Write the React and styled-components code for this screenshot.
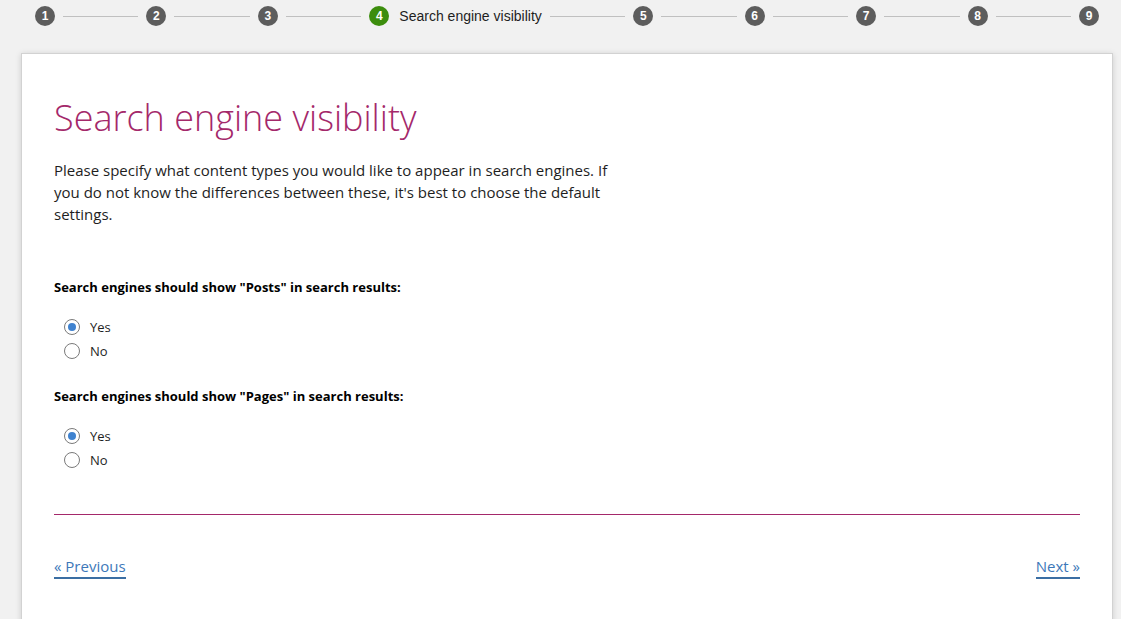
import React from 'react';
import styled, { createGlobalStyle } from 'styled-components';

const GlobalStyle = createGlobalStyle`
    html, body {
        margin: 0;
        padding: 0;
        background: #f1f1f1;
        font-family: "Open Sans", "Noto Sans", sans-serif;
        color: #1e1e1e;
    }
`;

const Page = styled.div`
    width: 1121px;
    height: 619px;
    overflow: hidden;
    background: #f1f1f1;
`;

const StepBar = styled.ol`
    display: flex;
    align-items: center;
    gap: 8px;
    list-style: none;
    margin: 0;
    padding: 6px 22px 0 35px;
    height: 20px;
`;

const Step = styled.li`
    display: flex;
    align-items: center;
    gap: 10px;
    flex: none;
`;

const Bullet = styled.span`
    display: flex;
    align-items: center;
    justify-content: center;
    width: 20px;
    height: 20px;
    border-radius: 50%;
    background: ${props => (props.active ? '#3c8d0d' : '#5d5d5d')};
    color: #fff;
    font: bold 12px "Liberation Sans", Arial, sans-serif;
`;

const StepLabel = styled.span`
    font: 14px "Liberation Sans", Arial, sans-serif;
    color: #1e1e1e;
`;

const Connector = styled.li`
    flex: 1;
    height: 1px;
    background: #c0c0c0;
`;

const Card = styled.main`
    margin: 27px 8px 0 21px;
    background: #fff;
    border: 1px solid #d2d2d2;
    box-shadow: 0 1px 6px rgba(0, 0, 0, 0.15);
    padding: 0 32px;
    height: 580px;
`;

const Title = styled.h1`
    margin: 41px 0 0;
    font-family: "Open Sans", "Noto Sans", sans-serif;
    font-weight: 300;
    font-size: 36px;
    line-height: 46px;
    color: #a4286a;
`;

const Intro = styled.p`
    margin: 18px 0 0;
    max-width: 580px;
    font-size: 15px;
    line-height: 22px;
    color: #1e1e1e;
`;

const Question = styled.fieldset`
    border: 0;
    margin: ${props => (props.first ? '52px' : '23px')} 0 0;
    padding: 0;
`;

const Legend = styled.legend`
    padding: 0;
    font-size: 13px;
    font-weight: 700;
    line-height: 20px;
    color: #000;
`;

const Choices = styled.div`
    display: flex;
    flex-direction: column;
    margin: 18px 0 0 10px;
`;

const Choice = styled.label`
    display: flex;
    align-items: center;
    gap: 10px;
    height: 24px;
    font-size: 13px;
    color: #1e1e1e;
`;

const Radio = styled.input.attrs({ type: 'radio' })`
    appearance: none;
    margin: 0;
    width: 16px;
    height: 16px;
    border: 1px solid #7a7a7a;
    border-radius: 50%;
    background: #fff;
    display: grid;
    place-items: center;
    &:checked::after {
        content: '';
        width: 8px;
        height: 8px;
        border-radius: 50%;
        background: #3f82cf;
    }
`;

const Divider = styled.div`
    margin-top: 42px;
    border-top: 1px solid #a4286a;
`;

const Nav = styled.nav`
    display: flex;
    justify-content: space-between;
    margin-top: 41px;
`;

const NavLink = styled.a`
    font-size: 15px;
    line-height: 20px;
    color: #3d78b9;
    text-decoration: none;
    border-bottom: 2px solid #3b6ea3;
    padding-bottom: 1px;
`;

const steps = [1, 2, 3, 4, 5, 6, 7, 8, 9];

const questions = [
    { name: 'posts', label: 'Search engines should show "Posts" in search results:' },
    { name: 'pages', label: 'Search engines should show "Pages" in search results:' },
];

const App = () => {
  return (
      <Page>
        <GlobalStyle />
        <StepBar>
            {steps.map((n, i) => (
                <React.Fragment key={n}>
                    {i > 0 && <Connector />}
                    <Step>
                        <Bullet active={n === 4}>{n}</Bullet>
                        {n === 4 && <StepLabel>Search engine visibility</StepLabel>}
                    </Step>
                </React.Fragment>
            ))}
        </StepBar>
        <Card>
            <Title>Search engine visibility</Title>
            <Intro>
                Please specify what content types you would like to appear in search engines. If
                you do not know the differences between these, it's best to choose the default
                settings.
            </Intro>
            {questions.map((q, i) => (
                <Question key={q.name} first={i === 0}>
                    <Legend>{q.label}</Legend>
                    <Choices>
                        <Choice><Radio name={q.name} defaultChecked />Yes</Choice>
                        <Choice><Radio name={q.name} />No</Choice>
                    </Choices>
                </Question>
            ))}
            <Divider />
            <Nav>
                <NavLink href="#">« Previous</NavLink>
                <NavLink href="#">Next »</NavLink>
            </Nav>
        </Card>
      </Page>
  );
};

export default App;
